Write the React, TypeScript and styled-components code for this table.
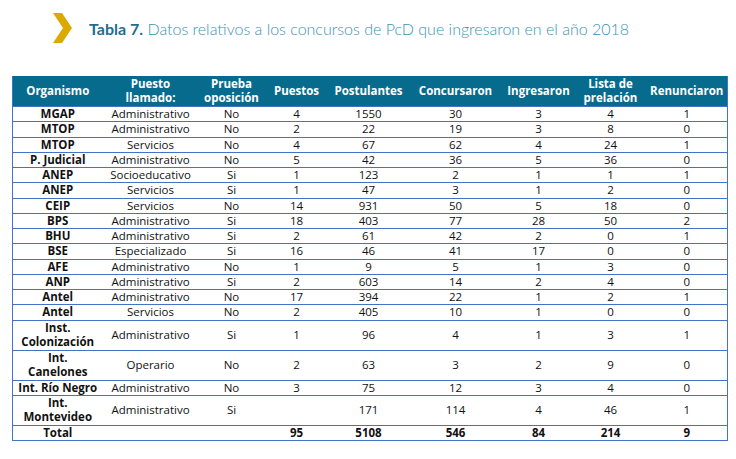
import React from 'react';
import styled, { createGlobalStyle } from 'styled-components';

type Row = {
  org: React.ReactNode;
  puesto: string;
  prueba: string;
  values: (number | string)[];
  tall?: boolean;
};

const rows: Row[] = [
  { org: 'MGAP', puesto: 'Administrativo', prueba: 'No', values: [4, 1550, 30, 3, 4, 1] },
  { org: 'MTOP', puesto: 'Administrativo', prueba: 'No', values: [2, 22, 19, 3, 8, 0] },
  { org: 'MTOP', puesto: 'Servicios', prueba: 'No', values: [4, 67, 62, 4, 24, 1] },
  { org: 'P. Judicial', puesto: 'Administrativo', prueba: 'No', values: [5, 42, 36, 5, 36, 0] },
  { org: 'ANEP', puesto: 'Socioeducativo', prueba: 'Si', values: [1, 123, 2, 1, 1, 1] },
  { org: 'ANEP', puesto: 'Servicios', prueba: 'Si', values: [1, 47, 3, 1, 2, 0] },
  { org: 'CEIP', puesto: 'Servicios', prueba: 'No', values: [14, 931, 50, 5, 18, 0] },
  { org: 'BPS', puesto: 'Administrativo', prueba: 'Si', values: [18, 403, 77, 28, 50, 2] },
  { org: 'BHU', puesto: 'Administrativo', prueba: 'Si', values: [2, 61, 42, 2, 0, 1] },
  { org: 'BSE', puesto: 'Especializado', prueba: 'Si', values: [16, 46, 41, 17, 0, 0] },
  { org: 'AFE', puesto: 'Administrativo', prueba: 'No', values: [1, 9, 5, 1, 3, 0] },
  { org: 'ANP', puesto: 'Administrativo', prueba: 'Si', values: [2, 603, 14, 2, 4, 0] },
  { org: 'Antel', puesto: 'Administrativo', prueba: 'No', values: [17, 394, 22, 1, 2, 1] },
  { org: 'Antel', puesto: 'Servicios', prueba: 'No', values: [2, 405, 10, 1, 0, 0] },
  { org: <>Inst.<br />Colonización</>, puesto: 'Administrativo', prueba: 'Si', values: [1, 96, 4, 1, 3, 1], tall: true },
  { org: <>Int.<br />Canelones</>, puesto: 'Operario', prueba: 'No', values: [2, 63, 3, 2, 9, 0], tall: true },
  { org: 'Int. Río Negro', puesto: 'Administrativo', prueba: 'No', values: [3, 75, 12, 3, 4, 0] },
  { org: <>Int.<br />Montevideo</>, puesto: 'Administrativo', prueba: 'Si', values: ['', 171, 114, 4, 46, 1], tall: true },
];

const totals = [95, 5108, 546, 84, 214, 9];
// column widths measured off the reference (sum = 715)
const widths = [90, 96, 66, 64, 80, 94, 72, 72, 81];

const App = () => {
  return (
    <Page>
      <GlobalStyle />
      <TitleRow>
        <svg width="20" height="30" viewBox="0 0 20 30">
          <polygon points="0,0 9,0 19,15 9,30 0,30 10,15" fill="#DBA900" />
        </svg>
        <Title>
          <strong>Tabla 7.</strong> Datos relativos a los concursos de PcD que ingresaron en el año 2018
        </Title>
      </TitleRow>
      <Table>
        <colgroup>
          {widths.map((w, i) => (
            <col key={i} style={{ width: w }} />
          ))}
        </colgroup>
        <thead>
          <tr>
            <Th>Organismo</Th>
            <Th>Puesto<br />llamado:</Th>
            <Th>Prueba<br />oposición</Th>
            <Th>Puestos</Th>
            <Th>Postulantes</Th>
            <Th>Concursaron</Th>
            <Th>Ingresaron</Th>
            <Th>Lista de<br />prelación</Th>
            <Th>Renunciaron</Th>
          </tr>
        </thead>
        <tbody>
          {rows.map((r, i) => (
            <Tr key={i} $tall={r.tall}>
              <Td $bold>{r.org}</Td>
              <Td>{r.puesto}</Td>
              <Td>{r.prueba}</Td>
              {r.values.map((v, j) => (
                <Td key={j}>{v}</Td>
              ))}
            </Tr>
          ))}
          <Tr>
            <Td $bold>Total</Td>
            <Td />
            <Td />
            {totals.map((v, j) => (
              <Td key={j} $bold>{v}</Td>
            ))}
          </Tr>
        </tbody>
      </Table>
    </Page>
  );
};

export default App;

const GlobalStyle = createGlobalStyle`
  body {
    margin: 0;
    background: #ffffff;
  }
`;

const Page = styled.div`
  width: 736px;
  height: 459px;
  padding: 13px 9px 0 12px;
  box-sizing: border-box;
  font-family: 'Open Sans', 'Liberation Sans', sans-serif;
  background: #ffffff;
`;

const TitleRow = styled.div`
  display: flex;
  align-items: center;
  gap: 16px;
  margin-left: 41px;
  height: 30px;
  margin-bottom: 33px;
`;

const Title = styled.div`
  font-family: 'Lato', 'Noto Sans', sans-serif;
  font-weight: 300;
  font-size: 16px;
  color: #3c93b4;
  white-space: nowrap;

  strong {
    font-weight: 700;
    color: #1f6e8e;
  }
`;

const Table = styled.table`
  width: 715px;
  table-layout: fixed;
  border-collapse: collapse;
  border-left: 1px solid #4472c4;
  border-right: 1px solid #4472c4;
  border-bottom: 1px solid #4472c4;
`;

const Th = styled.th`
  background: #076b8d;
  color: #ffffff;
  font-size: 11.5px;
  font-weight: 700;
  line-height: 14px;
  height: 30px;
  padding: 0;
  text-align: center;
  vertical-align: middle;
`;

const Tr = styled.tr<{ $tall?: boolean }>`
  height: ${(p) => (p.$tall ? '30px' : '15.25px')};
`;

const Td = styled.td<{ $bold?: boolean }>`
  font-size: 11.5px;
  font-weight: ${(p) => (p.$bold ? 700 : 400)};
  color: #111111;
  line-height: 14px;
  padding: 0;
  text-align: center;
  vertical-align: middle;
  white-space: nowrap;
  border-top: 1px solid #4472c4;
`;
